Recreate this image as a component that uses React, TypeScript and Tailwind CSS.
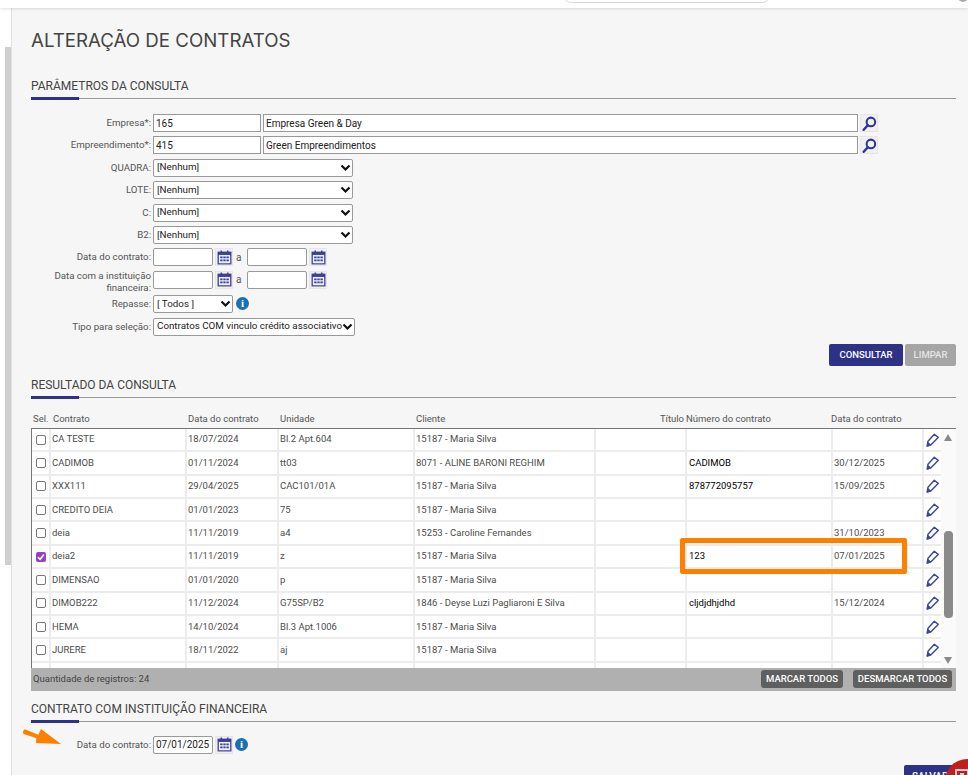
import { ReactNode } from "react";

type Contract = {
    name: string;
    date: string;
    unit: string;
    client: string;
    number?: string;
    bankDate?: string;
    checked?: boolean;
};

const contracts: Contract[] = [
    { name: "CA TESTE", date: "18/07/2024", unit: "Bl.2 Apt.604", client: "15187 - Maria Silva" },
    { name: "CADIMOB", date: "01/11/2024", unit: "tt03", client: "8071 - ALINE BARONI REGHIM", number: "CADIMOB", bankDate: "30/12/2025" },
    { name: "XXX111", date: "29/04/2025", unit: "CAC101/01A", client: "15187 - Maria Silva", number: "878772095757", bankDate: "15/09/2025" },
    { name: "CREDITO DEIA", date: "01/01/2023", unit: "75", client: "15187 - Maria Silva" },
    { name: "deia", date: "11/11/2019", unit: "a4", client: "15253 - Caroline Fernandes", bankDate: "31/10/2023" },
    { name: "deia2", date: "11/11/2019", unit: "z", client: "15187 - Maria Silva", number: "123", bankDate: "07/01/2025", checked: true },
    { name: "DIMENSAO", date: "01/01/2020", unit: "p", client: "15187 - Maria Silva" },
    { name: "DIMOB222", date: "11/12/2024", unit: "G75SP/B2", client: "1846 - Deyse Luzi Pagliaroni E Silva", number: "cljdjdhjdhd", bankDate: "15/12/2024" },
    { name: "HEMA", date: "14/10/2024", unit: "Bl.3 Apt.1006", client: "15187 - Maria Silva" },
    { name: "JURERE", date: "18/11/2022", unit: "aj", client: "15187 - Maria Silva" },
    { name: "", date: "", unit: "", client: "" },
];

const SectionTitle = ({ children }: { children: ReactNode }) => (
    <div className="relative h-[23px] border-b border-[#999] text-[12px] leading-[20px] text-[#444]">
        {children}
        <span className="absolute -bottom-[2px] left-0 h-[3px] w-[48px] bg-[#2d3286]" />
    </div>
);

const IconTile = ({ children }: { children: ReactNode }) => (
    <span className="flex h-[18px] w-[18px] shrink-0 items-center justify-center border border-[#e6e6e6] bg-[#f0f0f0]">
        {children}
    </span>
);

const SearchIcon = () => (
    <IconTile>
        <svg width="15" height="15" viewBox="0 0 14 14" fill="none" stroke="#2d3596">
            <circle cx="8.3" cy="5.5" r="4" strokeWidth="1.9" />
            <path d="M5.4 8.6 1.6 12.8" strokeWidth="2.3" strokeLinecap="round" />
        </svg>
    </IconTile>
);

const CalendarIcon = () => (
    <IconTile>
        <svg width="15" height="15" viewBox="0 0 14 14">
            <path d="M0.5 1.500h13v12h-13z" fill="#3b3f98" />
            <path d="M1.700 4.600h10.600v7.800H1.700z" fill="#eef0f8" />
            <path d="M3.300 0.500h1.400v2.400H3.300zM9.300 0.500h1.400v2.400H9.300z" fill="#3b3f98" />
            <path d="M3 6h2.200v1.800H3zM5.900 6h2.200v1.800H5.900zM8.800 6h2.200v1.800H8.800zM3 8.800h2.200v1.800H3zM5.900 8.800h2.200v1.800H5.900zM8.800 8.800h2.200v1.800H8.800z" fill="#3b3f98" />
        </svg>
    </IconTile>
);

const InfoIcon = () => (
    <span className="flex h-[13px] w-[13px] shrink-0 items-center justify-center rounded-full bg-[#1a6fb5] font-['Liberation_Serif',serif] text-[11px] leading-none font-bold text-white">
        i
    </span>
);

const PencilIcon = () => (
    <svg width="13" height="14" viewBox="0 0 13 14" fill="none" stroke="#3a46a0" strokeWidth="1.400" strokeLinejoin="round">
        <path d="M8.300 1.200 12.200 4.400 5 11.800 1.200 13 2 8.200z" />
        <path d="M1.400 12.800 1.900 9.800 4.300 11.900z" fill="#3a46a0" />
    </svg>
);

const Chevron = () => (
    <svg className="pointer-events-none absolute top-1/2 right-[2px] -translate-y-1/2" width="11" height="8" viewBox="0 0 11 8" fill="none" stroke="#111" strokeWidth="2.200">
        <path d="M1.500 1.500 5.500 5.500 9.500 1.500" />
    </svg>
);

const FormRow = ({ label, children, className = "" }: { label: ReactNode; children: ReactNode; className?: string }) => (
    <div className={`flex h-[22.4px] items-start ${className}`}>
        <label className="w-[122px] pt-[1px] pr-[2px] text-right text-[9.7px] leading-[15px] text-[#555]">{label}</label>
        {children}
    </div>
);

const TextBox = ({ value = "", className = "" }: { value?: string; className?: string }) => (
    <input
        readOnly
        value={value}
        className={`h-[18px] border border-[#999] bg-white pl-[2px] text-[10px] text-[#222] outline-none ${className}`}
    />
);

const SelectBox = ({ value, className = "" }: { value: string; className?: string }) => (
    <div className={`relative h-[18px] ${className}`}>
        <select
            defaultValue={value}
            className="block h-full w-full appearance-none rounded-[2px] border border-[#999] bg-white pl-[3px] text-[9.8px] text-[#222] outline-none"
        >
            <option>{value}</option>
        </select>
        <Chevron />
    </div>
);

const NenhumRow = ({ label }: { label: string }) => (
    <FormRow label={label}>
        <SelectBox value="[Nenhum]" className="w-[200px]" />
    </FormRow>
);

const Period = () => (
    <div className="flex items-center">
        <TextBox className="w-[60px] rounded-[2px]" />
        <span className="ml-[2px]"><CalendarIcon /></span>
        <span className="w-[14px] pl-[3px] text-[10px] text-[#555]">a</span>
        <TextBox className="w-[60px] rounded-[2px]" />
        <span className="ml-[2px]"><CalendarIcon /></span>
    </div>
);

const Row = ({ item }: { item: Contract }) => {
    const cell = "flex items-center overflow-hidden whitespace-nowrap border-r-2 border-[#ececec]";
    return (
        <div className="grid h-[23.4px] grid-cols-[19px_136px_92px_136px_181px_91px_146px_91px_17px] border-b-2 border-[#ececec] text-[9.5px] text-[#4c4c4c]">
            <div className={`${cell} pl-[4px]`}>
                {item.name &&
                    (item.checked ? (
                        <span className="flex h-[10px] w-[10px] items-center justify-center rounded-[2px] bg-[#9a3fc2]">
                            <svg width="8" height="8" viewBox="0 0 8 8" fill="none" stroke="#fff" strokeWidth="1.500">
                                <path d="M1 4.200 3.100 6.300 7 1.500" />
                            </svg>
                        </span>
                    ) : (
                        <span className="h-[10px] w-[10px] rounded-[2px] border border-[#777] bg-white" />
                    ))}
            </div>
            <div className={`${cell} pl-px`}>{item.name}</div>
            <div className={`${cell} pl-px`}>{item.date}</div>
            <div className={`${cell} pl-px`}>{item.unit}</div>
            <div className={`${cell} pl-px`}>{item.client}</div>
            <div className={cell} />
            <div className={`${cell} pl-[2px] text-black`}>{item.number}</div>
            <div className={`${cell} pl-px`}>{item.bankDate}</div>
            <div className="flex items-center justify-center">{item.name && <PencilIcon />}</div>
        </div>
    );
};

const ResultTable = () => (
    <div>
        <div className="grid h-[30px] grid-cols-[20px_135px_92px_136px_180px_90px_145px_124px] items-end pb-[2px] pl-[2px] text-[9.5px] leading-[15px] text-[#555]">
            <span>Sel.</span>
            <span>Contrato</span>
            <span>Data do contrato</span>
            <span>Unidade</span>
            <span>Cliente</span>
            <span className="pr-[2px] text-right">Título</span>
            <span>Número do contrato</span>
            <span>Data do contrato</span>
        </div>
        <div className="flex h-[240px] overflow-hidden border-t border-l border-[#777] bg-white">
            <div className="h-[260px] w-[909px] shrink-0">
                {contracts.map((item, i) => (
                    <Row key={i} item={item} />
                ))}
            </div>
            <div className="relative w-[15px] shrink-0 bg-[#fafafa]">
                <span className="absolute top-[5px] left-[3px] h-0 w-0 border-x-[4.5px] border-b-[7px] border-x-transparent border-b-[#8a8a8a]" />
                <span className="absolute top-[102px] left-[3px] h-[87px] w-[9px] rounded-[4px] bg-[#8a8a8a]" />
                <span className="absolute bottom-[4px] left-[3px] h-0 w-0 border-x-[4.5px] border-t-[7px] border-x-transparent border-t-[#8a8a8a]" />
            </div>
        </div>
        <div className="flex h-[23px] items-center justify-between bg-[#b0b0b0] pr-[4px] pl-[2px] text-[9.5px] text-[#444]">
            <span>Quantidade de registros: 24</span>
            <div className="flex gap-[10px]">
                <button className="h-[18px] w-[82px] rounded-[3px] bg-[#5f5f5f] text-[9.5px] font-medium text-white">MARCAR TODOS</button>
                <button className="h-[18px] w-[99px] rounded-[3px] bg-[#5f5f5f] text-[9.5px] font-medium text-white">DESMARCAR TODOS</button>
            </div>
        </div>
    </div>
);

export default function App() {
    return (
        <div className="relative h-[775px] w-[968px] overflow-hidden bg-white font-['Roboto',sans-serif]">
            <div className="relative z-10 h-[8px] bg-white shadow-[0_1px_3px_rgba(0,0,0,0.12)]">
                <span className="absolute -top-[10px] left-[564px] h-[13px] w-[205px] rounded-[10px] border border-[#d8d8d8] bg-white" />
                <span className="absolute -top-[8px] left-[958px] h-[10px] w-[10px] rounded-full bg-[#aaa]" />
            </div>
            <div className="flex h-[767px]">
                <div className="w-[11px] shrink-0 pt-[39px] pl-[5px]">
                    <div className="h-[518px] bg-[#cfcfcf]" />
                </div>
                <main className="flex-1 border-l border-[#e2e2e2] bg-[#f6f6f6] pt-[20px] pr-[13px] pl-[19px]">
                    <h1 className="h-[26px] font-['Inter',sans-serif] text-[18.7px] leading-[26px] font-normal text-[#444]">ALTERAÇÃO DE CONTRATOS</h1>
                    <div className="mt-[22px]">
                        <SectionTitle>PARÂMETROS DA CONSULTA</SectionTitle>
                    </div>

                    <div className="mt-[15px]">
                        <FormRow label="Empresa*:">
                            <TextBox value="165" className="w-[108px]" />
                            <TextBox value="Empresa Green &amp; Day" className="ml-[2px] w-[595px]" />
                            <span className="ml-[2px]"><SearchIcon /></span>
                        </FormRow>
                        <FormRow label="Empreendimento*:">
                            <TextBox value="415" className="w-[108px]" />
                            <TextBox value="Green Empreendimentos" className="ml-[2px] w-[595px]" />
                            <span className="ml-[2px]"><SearchIcon /></span>
                        </FormRow>
                        <NenhumRow label="QUADRA:" />
                        <NenhumRow label="LOTE:" />
                        <NenhumRow label="C:" />
                        <NenhumRow label="B2:" />
                        <FormRow label="Data do contrato:">
                            <Period />
                        </FormRow>
                        <FormRow label={<span className="-mt-[2px] block leading-[12px]">Data com a instituição financeira:</span>}>
                            <Period />
                        </FormRow>
                        <FormRow label="Repasse:" className="mt-[2px]">
                            <SelectBox value="[ Todos ]" className="w-[80px]" />
                            <span className="mt-[2px] ml-[3px]"><InfoIcon /></span>
                        </FormRow>
                        <FormRow label="Tipo para seleção:">
                            <SelectBox value="Contratos COM vinculo crédito associativo" className="w-[202px]" />
                        </FormRow>
                    </div>

                    <div className="mt-[4px] flex h-[22px] justify-end gap-[2px]">
                        <button className="w-[74px] rounded-[2px] bg-[#2d3286] text-[9.5px] font-medium text-white">CONSULTAR</button>
                        <button className="w-[51px] rounded-[2px] bg-[#a5a5a5] text-[9.5px] font-medium text-[#e4e4e4]">LIMPAR</button>
                    </div>

                    <div className="mt-[9px]">
                        <SectionTitle>RESULTADO DA CONSULTA</SectionTitle>
                    </div>
                    <ResultTable />

                    <div className="mt-[8px]">
                        <SectionTitle>CONTRATO COM INSTITUIÇÃO FINANCEIRA</SectionTitle>
                    </div>
                    <div className="mt-[14px]">
                        <FormRow label="Data do contrato:">
                            <TextBox value="07/01/2025" className="w-[60px] rounded-[2px] border-[#777] text-[#111]" />
                            <span className="ml-[2px]"><CalendarIcon /></span>
                            <span className="mt-[2px] ml-[2px]"><InfoIcon /></span>
                        </FormRow>
                    </div>
                    <div className="mt-[7px] flex justify-end">
                        <button className="-mr-[13px] h-[22px] w-[65px] rounded-[2px] bg-[#2d3286] pl-[8px] text-left text-[10px] font-medium whitespace-nowrap text-white">SALVAR</button>
                    </div>
                </main>
            </div>

            {/* marcacoes por cima do print */}
            <div className="absolute top-[538px] left-[680px] h-[36px] w-[227px] rounded-[2px] border-[5px] border-[#ff8000]" />
            <svg className="absolute top-[728px] left-[22px]" width="40" height="18" viewBox="0 0 40 18" fill="#ff8000">
                <path d="M2.800 1.300 16.300 6.700 19 1 39 16 14 15 14.300 10 1.500 6 Q0 3 2.800 1.300z" />
            </svg>
            <div className="absolute top-[759px] left-[945px] h-[44px] w-[44px] rounded-full bg-[#c01f1f]">
                <span className="absolute top-[10px] left-[10px] flex h-[12px] w-[14px] items-center justify-center border-2 border-[#f3d0d0]">
                    <span className="h-[4px] w-[4px] bg-[#f3d0d0]" />
                </span>
            </div>
        </div>
    );
}
